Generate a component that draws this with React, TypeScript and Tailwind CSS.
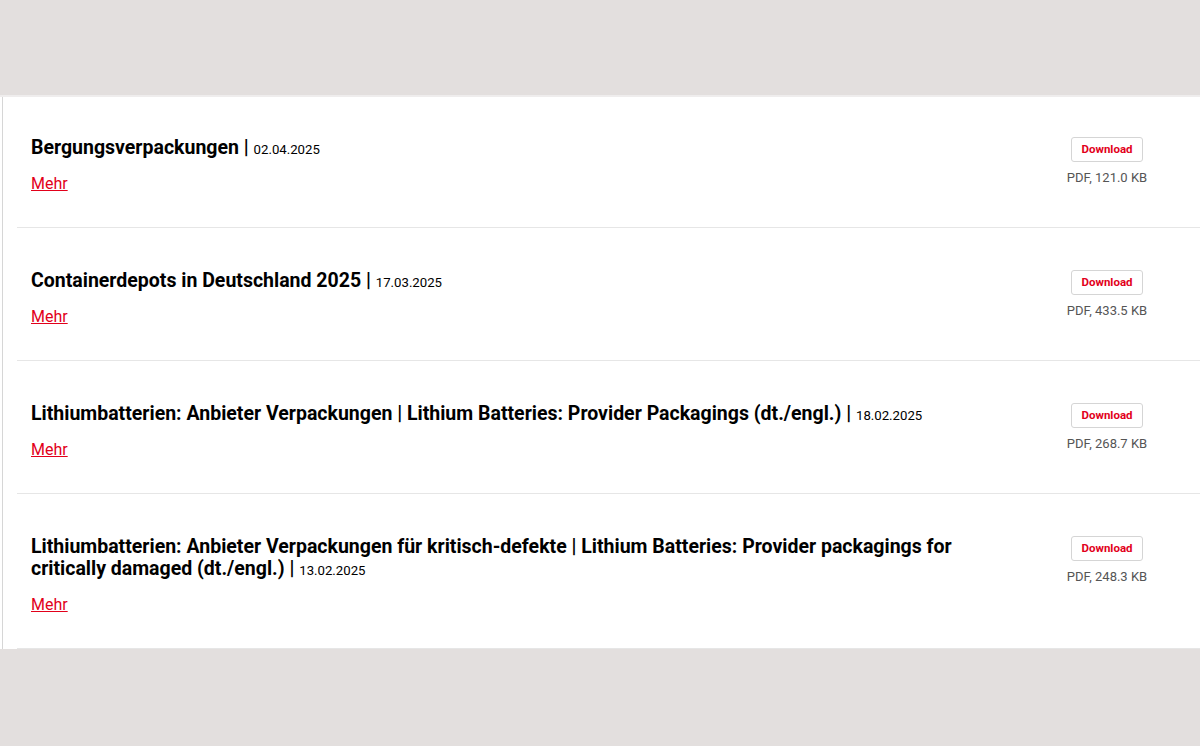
const items = [
  { title: "Bergungsverpackungen", date: "02.04.2025", size: "PDF, 121.0 KB" },
  { title: "Containerdepots in Deutschland 2025", date: "17.03.2025", size: "PDF, 433.5 KB" },
  {
    title: "Lithiumbatterien: Anbieter Verpackungen | Lithium Batteries: Provider Packagings (dt./engl.)",
    date: "18.02.2025",
    size: "PDF, 268.7 KB",
  },
  {
    title:
      "Lithiumbatterien: Anbieter Verpackungen für kritisch-defekte | Lithium Batteries: Provider packagings for critically damaged (dt./engl.)",
    date: "13.02.2025",
    size: "PDF, 248.3 KB",
  },
];

const DownloadRow = ({ title, date, size }: { title: string; date: string; size: string }) => {
  return (
    <div className="flex justify-between border-b border-[#e6e6e6] pl-[14px] pr-[28px] pt-[42px] pb-[34px] first:pt-[40px]">
      <div className="w-[940px]">
        <h3 className="text-[19.5px] leading-[22px] font-bold text-black">
          {title} <span>|</span>{" "}
          <span className="text-[13.2px] font-normal">{date}</span>
        </h3>
        <a href="#" className="mt-[14px] block w-fit text-[16px] leading-[18px] text-[#e2001a] underline">
          Mehr
        </a>
      </div>
      <div className="flex w-[130px] flex-col items-center">
        <button className="h-[25px] rounded-[3px] border border-[#d5d5d5] bg-white px-[9px] text-[11.5px] font-bold text-[#e2001a]">
          Download
        </button>
        <span className="mt-[8px] text-[13px] leading-[15px] text-[#555]">{size}</span>
      </div>
    </div>
  );
};

export default function App() {
  return (
    <div
      className="flex h-[746px] w-[1200px] flex-col bg-[#e3dfde]"
      style={{ fontFamily: "Roboto, 'Liberation Sans', sans-serif" }}
    >
      <div className="h-[95px] shrink-0" />
      <div className="border-t-[2px] border-[#efeded] bg-white">
        <div className="ml-[2px] border-l border-[#d6d6d6] pl-[14px]">
          {items.map((it) => (
            <DownloadRow key={it.title} {...it} />
          ))}
        </div>
      </div>
    </div>
  );
}
